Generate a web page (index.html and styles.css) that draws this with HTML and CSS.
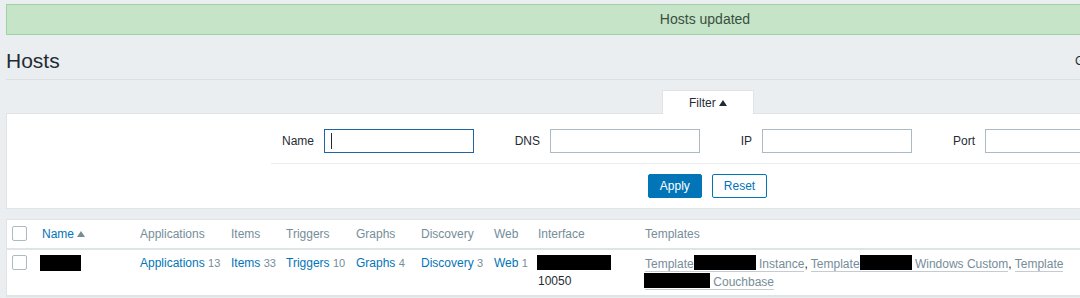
FILE: index.html
```html
<!DOCTYPE html>
<html lang="en">

<head>
    <meta charset="UTF-8" />
    <title>Hosts</title>
    <link rel="stylesheet" href="styles.css">
</head>

<body>
    <div class="page">
        <div class="msg-good">Hosts updated</div>

        <header class="header">
            <h1>Hosts</h1>
            <div class="header-controls">
                <span>Group</span>
                <span class="select">all</span>
                <button class="btn">Create host</button>
                <button class="btn-alt">Import</button>
            </div>
        </header>

        <div class="filter">
            <div class="filter-tabs">
                <span class="filter-tab">Filter <span class="arrow-up dark"></span></span>
            </div>
            <div class="filter-panel">
                <div class="filter-form">
                    <div class="filter-fields">
                        <label class="field-label">Name</label>
                        <span class="input-wrap">
                            <input class="input focused" type="text">
                            <span class="caret"></span>
                        </span>
                        <label class="field-label">DNS</label>
                        <input class="input" type="text">
                        <label class="field-label">IP</label>
                        <input class="input" type="text">
                        <label class="field-label">Port</label>
                        <input class="input" type="text">
                    </div>
                    <div class="filter-buttons">
                        <button class="btn">Apply</button>
                        <button class="btn-alt">Reset</button>
                    </div>
                </div>
            </div>
        </div>

        <table class="list-table">
            <colgroup>
                <col class="c-check">
                <col class="c-name">
                <col class="c-apps">
                <col class="c-items">
                <col class="c-triggers">
                <col class="c-graphs">
                <col class="c-discovery">
                <col class="c-web">
                <col class="c-interface">
                <col class="c-templates">
                <col class="c-status">
                <col class="c-avail">
                <col class="c-encrypt">
                <col class="c-info">
            </colgroup>
            <thead>
                <tr>
                    <th><span class="checkbox"></span></th>
                    <th><a class="link">Name</a> <span class="arrow-up"></span></th>
                    <th>Applications</th>
                    <th>Items</th>
                    <th>Triggers</th>
                    <th>Graphs</th>
                    <th>Discovery</th>
                    <th>Web</th>
                    <th>Interface</th>
                    <th>Templates</th>
                    <th>Status</th>
                    <th>Availability</th>
                    <th>Agent encryption</th>
                    <th>Info</th>
                </tr>
            </thead>
            <tbody>
                <tr>
                    <td><span class="checkbox"></span></td>
                    <td><span class="redact redact-name"></span></td>
                    <td><a class="link">Applications</a> <span class="count">13</span></td>
                    <td><a class="link">Items</a> <span class="count">33</span></td>
                    <td><a class="link">Triggers</a> <span class="count">10</span></td>
                    <td><a class="link">Graphs</a> <span class="count">4</span></td>
                    <td><a class="link">Discovery</a> <span class="count">3</span></td>
                    <td><a class="link">Web</a> <span class="count">1</span></td>
                    <td><span class="redact redact-ip"></span><br>10050</td>
                    <td>
                        <a class="link-alt">Template<span class="redact redact-t1"></span> Instance</a>,
                        <a class="link-alt">Template<span class="redact redact-t2"></span> Windows Custom</a>,
                        <a class="link-alt">Template <span class="redact redact-t3"></span> Couchbase</a>
                    </td>
                    <td></td>
                    <td></td>
                    <td></td>
                    <td></td>
                </tr>
            </tbody>
        </table>
    </div>
</body>

</html>
```

FILE: styles.css
```css
* {
    box-sizing: border-box;
}

body {
    margin: 0;
    background: #ebeef0;
    font-family: "Liberation Sans", Arial, sans-serif;
    font-size: 12px;
    color: #1f2c33;
    overflow: hidden;
}

.page {
    width: 1410px;
    padding: 4px 6px 0;
}

.msg-good {
    height: 31px;
    line-height: 29px;
    border: 1px solid #9dd3a0;
    background: #c5e4c8;
    color: #3a4f3e;
    font-size: 14px;
    text-align: center;
}

.header {
    display: flex;
    align-items: center;
    padding: 14px 0 6px;
    border-bottom: 1px solid #dcdfe2;
}

.header h1 {
    flex: 1;
    margin: 0;
    font-size: 21px;
    line-height: 24px;
    font-weight: normal;
}

.header-controls {
    width: 329px;
    display: flex;
    align-items: center;
    gap: 10px;
    white-space: nowrap;
}

.select {
    width: 150px;
    height: 24px;
    line-height: 22px;
    padding: 0 5px;
    border: 1px solid #acbbc2;
    background: #fff;
}

.btn,
.btn-alt {
    height: 24px;
    padding: 0 11px;
    border: 1px solid #0275b8;
    border-radius: 2px;
    font: inherit;
    background: #0275b8;
    color: #fff;
}

.btn-alt {
    background: #fff;
    color: #0275b8;
}

/* filter */

.filter {
    margin-top: 10px;
}

.filter-tabs {
    display: flex;
    justify-content: center;
    padding-left: 6px;
}

.filter-tab {
    position: relative;
    z-index: 1;
    width: 92px;
    height: 24px;
    margin-bottom: -1px;
    line-height: 24px;
    text-align: center;
    background: #fff;
    border: 1px solid #dfe4e7;
    border-bottom: 0;
}

.arrow-up {
    display: inline-block;
    width: 0;
    height: 0;
    border-left: 4px solid transparent;
    border-right: 4px solid transparent;
    border-bottom: 6px solid #768d99;
    vertical-align: 1px;
}

.arrow-up.dark {
    border-bottom-color: #1f2c33;
}

.filter-panel {
    background: #fff;
    border: 1px solid #dfe4e7;
    padding: 15px 0 10px;
}

.filter-form {
    margin-left: 264px;
    width: 873px;
}

.filter-fields {
    display: grid;
    grid-template-columns: 53px 150px 76px 150px 62px 150px 73px 150px;
    align-items: center;
    padding-bottom: 10px;
    border-bottom: 1px solid #ebeef0;
}

.field-label {
    text-align: right;
    padding-right: 10px;
}

.input {
    display: block;
    width: 150px;
    height: 24px;
    padding: 0 5px;
    border: 1px solid #acbbc2;
    font: inherit;
    background: #fff;
    outline: none;
}

.input.focused {
    border-color: #1f65a6;
}

.input-wrap {
    position: relative;
}

.caret {
    position: absolute;
    left: 7px;
    top: 4px;
    width: 1px;
    height: 16px;
    background: #1f2c33;
}

.filter-buttons {
    display: flex;
    justify-content: center;
    gap: 10px;
    margin-top: 10px;
}

/* list */

.list-table {
    margin-top: 10px;
    width: 1398px;
    table-layout: fixed;
    border-collapse: separate;
    border-spacing: 0;
    background: #fff;
    border: 1px solid #dfe4e7;
}

.c-check { width: 30px; }
.c-name { width: 98px; }
.c-apps { width: 91px; }
.c-items { width: 55px; }
.c-triggers { width: 70px; }
.c-graphs { width: 65px; }
.c-discovery { width: 73px; }
.c-web { width: 44px; }
.c-interface { width: 107px; }
.c-templates { width: 465px; }
.c-status { width: 60px; }
.c-avail { width: 110px; }
.c-encrypt { width: 100px; }
.c-info { width: 28px; }

.list-table th {
    padding: 6px 5px;
    line-height: 16px;
    text-align: left;
    font-weight: normal;
    color: #768d99;
    white-space: nowrap;
    border-bottom: 2px solid #dfe4e7;
}

.list-table td {
    padding: 5px 5px 4px;
    line-height: 17px;
    vertical-align: top;
    border-bottom: 1px solid #dfe4e7;
}

.checkbox {
    display: inline-block;
    width: 15px;
    height: 15px;
    border: 1px solid #acbbc2;
    border-radius: 2px;
    background: #fff;
    vertical-align: top;
}

.link {
    color: #0275b8;
}

.count {
    color: #768d99;
    font-size: 11px;
}

.link-alt {
    color: #768d99;
    border-bottom: 1px solid #c3ccd2;
}

.redact {
    display: inline-block;
    height: 15px;
    background: #000;
    vertical-align: -2px;
}

.redact-name {
    width: 41px;
    height: 16px;
    margin-left: -2px;
}

.redact-ip {
    width: 74px;
    margin-left: -1px;
}

.redact-t1 { width: 62px; }
.redact-t2 { width: 52px; }
.redact-t3 { width: 66px; margin-left: -1px; }
```
